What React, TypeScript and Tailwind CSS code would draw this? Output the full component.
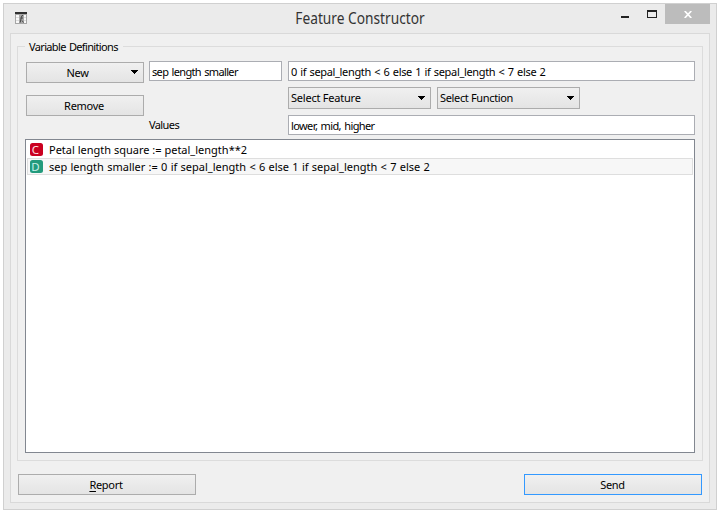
import type { ReactNode } from "react";

function Arrow() {
  return (
    <svg width="7" height="4" viewBox="0 0 7 4" shapeRendering="crispEdges" className="shrink-0">
      <path d="M0 0h7v1H6v1H5v1H4v1H3V3H2V2H1V1H0z" fill="#000" />
    </svg>
  );
}

function Button({ className, children }: { className: string; children: ReactNode }) {
  return (
    <button
      className={`flex h-[21px] items-center justify-center border bg-linear-to-b from-[#f0f0f0] to-[#e4e4e4] leading-none tracking-[-0.3px] ${className}`}
    >
      {children}
    </button>
  );
}

function Select({ label, spacing }: { label: string; spacing: string }) {
  return (
    <button className="flex h-[22px] w-[143px] items-center justify-between border border-[#acacac] bg-linear-to-b from-[#f0f0f0] to-[#e4e4e4] pr-[5px] pl-[2px] leading-none">
      <span className={`-mt-px ${spacing}`}>{label}</span>
      <Arrow />
    </button>
  );
}

function Field({ className, text, spacing }: { className: string; text: string; spacing: string }) {
  return (
    <div className={`flex h-5 items-center border border-[#abadb3] bg-white pt-px pl-[2px] leading-none whitespace-pre ${className}`}>
      <span className={spacing}>{text}</span>
    </div>
  );
}

function Badge({ letter, className }: { letter: string; className: string }) {
  return (
    <span className={`flex size-[13px] items-center justify-center rounded-[2.5px] pr-[2px] text-[11.5px] leading-none ${className}`}>
      {letter}
    </span>
  );
}

export default function App() {
  return (
    <div className="h-[513px] w-[720px] overflow-hidden bg-white p-[3px] font-['Noto_Sans','Open_Sans',sans-serif] text-[11px] text-black">
      <div className="flex h-[507px] w-[714px] flex-col border border-[#d0d0d0] bg-[#ebebeb] px-[6px]">
        <header className="relative flex h-[29px] shrink-0 items-start justify-between">
          <svg width="12" height="12" viewBox="0 0 12 12" className="mt-2 ml-[5px]">
            <path d="M0 0h12v12H0z" fill="#a6a6a6" />
            <path d="M1 3h3v2H1zM1 6h3v2H1zM1 9h3v2H1zM9 3h2v2H9zM9 6h2v2H9zM9 9h2v2H9z" fill="#f8f8f8" />
            <path d="M1 5h3v1H1zM1 8h3v1H1zM9 5h2v1H9zM9 8h2v1H9z" fill="#dcdcdc" />
            <path d="M0 0h12v2H0z" fill="#303030" />
            <path d="M4 2h5v10H4z" fill="#a8a8a8" />
            <path d="M8 3.5Q6.6 3 6.3 5.5L5.2 10.5M5.5 6h2.5M7 8.5l1.5 2" stroke="#444" fill="none" />
          </svg>
          <h1 className="absolute inset-x-0 top-1 scale-x-[.885] text-center text-[15.5px] leading-5 text-[#333]">Feature Constructor</h1>
          <div className="flex items-start">
            <svg width="8" height="2" className="mt-3 mr-[18px]"><path d="M0 0h8v2H0z" fill="#222" /></svg>
            <svg width="10" height="8" shapeRendering="crispEdges" className="mt-[6px] mr-2"><path fillRule="evenodd" d="M0 0h10v8H0zM1 2v5h8V2z" fill="#222" /></svg>
            <div className="flex h-5 w-[45px] items-center justify-center bg-[#bcbcbc]">
              <svg width="8" height="7" viewBox="0 0 8 7"><path d="M.7 0L7.3 7M7.3 0L.7 7" stroke="#fff" strokeWidth="1.7" /></svg>
            </div>
          </div>
        </header>
        <main className="flex h-[470px] w-[700px] shrink-0 flex-col border border-[#d9d9d9] bg-[#f0f0f0] px-[6px] pt-3">
          <section className="relative h-[415px] w-[686px] border border-[#dcdcdc] pt-[14px] pl-[7px]">
            <h2 className="absolute -top-2 left-[7px] bg-[#f0f0f0] pr-[5px] pl-1 leading-4 tracking-[-0.65px] [word-spacing:1px]">Variable Definitions</h2>
            <div className="flex h-[78px] pl-px">
              <div className="flex w-[123px] flex-col gap-3 pt-px">
                <Button className="relative w-[118px] border-[#acacac]">
                  <span className="-ml-[15px]">New</span>
                  <span className="absolute top-[7px] right-[5px]"><Arrow /></span>
                </Button>
                <Button className="w-[118px] border-[#acacac]"><span className="-ml-[2px]">Remove</span></Button>
              </div>
              <div className="flex w-[139px] flex-col">
                <Field className="w-[133px]" text="sep length smaller" spacing="tracking-[-0.65px] [word-spacing:1px]" />
                <span className="mt-9 leading-4 tracking-[-0.6px]">Values</span>
              </div>
              <div className="flex flex-col gap-[6px]">
                <Field className="w-[407px]" text="0 if sepal_length < 6 else 1 if sepal_length < 7 else 2" spacing="tracking-[-0.34px] [word-spacing:0.8px]" />
                <div className="flex gap-[6px]">
                  <Select label="Select Feature" spacing="tracking-[-0.22px]" />
                  <Select label="Select Function" spacing="tracking-[-0.35px]" />
                </div>
                <Field className="w-[407px]" text="lower, mid, higher" spacing="tracking-[-0.6px] [word-spacing:1px]" />
              </div>
            </div>
            <ul className="h-[314px] w-[670px] border border-[#828790] bg-white px-px pt-px">
              <li className="flex h-[17px] items-center gap-[6px] border border-transparent pl-[2px]">
                <Badge letter="C" className="bg-[#ca0020] text-[#ffe0e4]" />
                <span className="pt-px">Petal length square := petal_length**2</span>
              </li>
              <li className="flex h-[17px] items-center gap-[6px] border border-[#dedede] bg-[#f7f7f7] pl-[2px]">
                <Badge letter="D" className="bg-[#229a7c] text-[#c8f0e8]" />
                <span className="pt-px [word-spacing:0.42px]">{"sep length smaller := 0 if sepal_length < 6 else 1 if sepal_length < 7 else 2"}</span>
              </li>
            </ul>
          </section>
          <footer className="mt-[13px] flex justify-between pr-px pl-px">
            <Button className="w-[178px] border-[#acacac]">
              <span className="-ml-[2px]"><span className="underline underline-offset-2">R</span>eport</span>
            </Button>
            <Button className="w-[178px] border-[#3399ff]"><span className="-ml-px">Send</span></Button>
          </footer>
        </main>
      </div>
    </div>
  );
}
